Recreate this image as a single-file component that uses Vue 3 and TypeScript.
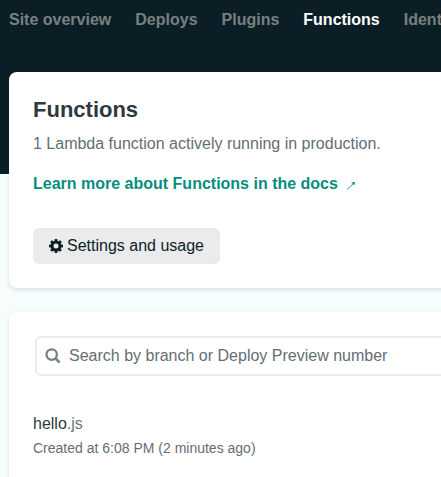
<script setup lang="ts">
import { ref } from 'vue'

interface NavItem {
  label: string
  active?: boolean
}

const navItems: NavItem[] = [
  { label: 'Site overview' },
  { label: 'Deploys' },
  { label: 'Plugins' },
  { label: 'Functions', active: true },
  { label: 'Identity' },
]

const query = ref('')
const teeth: number[] = [0, 45, 90, 135, 180, 225, 270, 315]
</script>

<template>
  <div class="page">
    <header class="header">
      <nav class="nav">
        <a v-for="item in navItems" :key="item.label" class="nav-link" :class="{ active: item.active }">{{ item.label }}</a>
      </nav>
    </header>
    <main class="content">
      <section class="card intro">
        <h1 class="title">Functions</h1>
        <p class="summary">1 Lambda function actively running in production.</p>
        <a class="docs">
          <span>Learn more about Functions in the docs</span>
          <svg class="arrow" width="10" height="9" viewBox="0 0 10 9" aria-hidden="true">
            <path d="M1 8.5 7.5 2.5" fill="none" stroke="currentColor" stroke-width=".8" />
            <path d="M5 1.6 9 1 8.3 4.8 7.2 2.9Z" fill="currentColor" />
          </svg>
        </a>
        <button class="button" type="button">
          <svg width="14" height="14" viewBox="0 0 14 14" aria-hidden="true">
            <circle cx="7" cy="7" r="3.9" fill="none" stroke="currentColor" stroke-width="2.8" />
            <path v-for="angle in teeth" :key="angle" d="M5.3 2.5 5.8 0H8.2L8.7 2.5Z" :transform="`rotate(${angle} 7 7)`" fill="currentColor" />
          </svg>
          <span>Settings and usage</span>
        </button>
      </section>
      <section class="card list">
        <label class="search">
          <svg width="16" height="16" viewBox="0 0 16 16" aria-hidden="true">
            <circle cx="6.7" cy="6.6" r="5.2" fill="none" stroke="currentColor" stroke-width="2.3" />
            <path d="m10.5 10.4 4.1 4.1" fill="none" stroke="currentColor" stroke-width="2.5" />
          </svg>
          <input v-model="query" type="text" placeholder="Search by branch or Deploy Preview number" />
        </label>
        <div class="entry">
          <div class="name">hello<span class="ext">.js</span></div>
          <div class="created">Created at 6:08 PM (2 minutes ago)</div>
        </div>
      </section>
    </main>
  </div>
</template>

<style>
body {
  background: #f6fdfc;
  overflow: hidden;
}
</style>

<style scoped>
.page {
  box-sizing: border-box;
  height: 477px;
  overflow: hidden;
  background: linear-gradient(#0c1e25 174px, #f7fdfd 174px);
  font: 16px/24px "Liberation Sans", Arial, sans-serif;
  color: #646e73;
}
.header {
  height: 72px;
  box-sizing: border-box;
  padding: 8px 0 0 9px;
}
.nav {
  display: flex;
  gap: 24px;
  white-space: nowrap;
}
.nav-link {
  font-weight: 700;
  color: #778083;
}
.nav-link.active {
  color: #fff;
}
.content {
  display: flex;
  flex-direction: column;
  gap: 24px;
  padding-left: 9px;
}
.card {
  box-sizing: border-box;
  width: 600px;
  background: #fff;
  border-radius: 8px;
  padding: 24px;
  box-shadow: 0 2px 4px rgba(14, 70, 65, 0.15);
}
.intro {
  height: 216px;
}
.title {
  margin: 0;
  font-size: 22px;
  line-height: 28px;
  color: #2d3b41;
}
.summary {
  margin: 8px 0 16px;
}
.docs {
  display: flex;
  align-items: center;
  gap: 8px;
  color: #058e80;
  font-weight: 700;
}
.arrow {
  margin-top: 3px;
}
.button {
  display: flex;
  align-items: center;
  gap: 4px;
  height: 36px;
  width: 187px;
  margin: 32px 0 0;
  padding: 0 16px;
  border: 0;
  border-radius: 6px;
  background: #e9ebec;
  color: #0e1e25;
  font: inherit;
  white-space: nowrap;
}
.list {
  height: 300px;
}
.search {
  display: flex;
  align-items: center;
  gap: 8px;
  box-sizing: border-box;
  height: 40px;
  margin-left: 2px;
  padding-left: 8px;
  border: 2px solid #e9ebeb;
  border-radius: 6px;
  color: #778186;
}
.search input {
  flex: 1;
  padding: 0;
  border: 0;
  outline: 0;
  background: transparent;
  font: inherit;
  color: #0e1e25;
}
.search input::placeholder {
  color: #646e73;
}
.entry {
  margin-top: 36px;
}
.name {
  color: #2d3b41;
}
.ext {
  color: #69757a;
}
.created {
  font-size: 14px;
}
</style>
